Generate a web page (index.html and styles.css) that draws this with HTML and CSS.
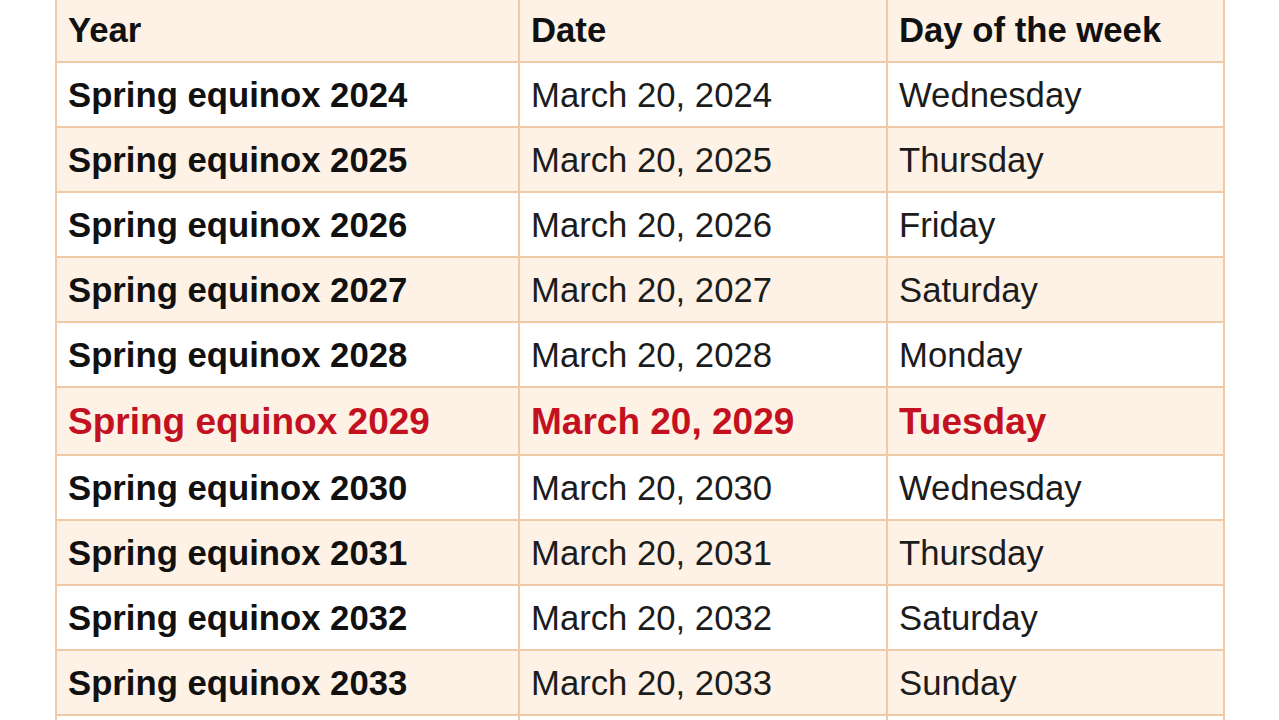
FILE: index.html
```html
<!DOCTYPE html>
<html>
<head>
<meta charset="utf-8">
<link rel="stylesheet" href="styles.css">
</head>
<body>
<table class="equinox">
  <colgroup>
    <col class="c-year">
    <col class="c-date">
    <col class="c-day">
  </colgroup>
  <tr class="head cream">
    <th>Year</th><th>Date</th><th>Day of the week</th>
  </tr>
  <tr><td class="yr">Spring equinox 2024</td><td>March 20, 2024</td><td>Wednesday</td></tr>
  <tr class="cream"><td class="yr">Spring equinox 2025</td><td>March 20, 2025</td><td>Thursday</td></tr>
  <tr><td class="yr">Spring equinox 2026</td><td>March 20, 2026</td><td>Friday</td></tr>
  <tr class="cream"><td class="yr">Spring equinox 2027</td><td>March 20, 2027</td><td>Saturday</td></tr>
  <tr><td class="yr">Spring equinox 2028</td><td>March 20, 2028</td><td>Monday</td></tr>
  <tr class="cream hl"><td class="yr">Spring equinox 2029</td><td>March 20, 2029</td><td>Tuesday</td></tr>
  <tr><td class="yr">Spring equinox 2030</td><td>March 20, 2030</td><td>Wednesday</td></tr>
  <tr class="cream"><td class="yr">Spring equinox 2031</td><td>March 20, 2031</td><td>Thursday</td></tr>
  <tr><td class="yr">Spring equinox 2032</td><td>March 20, 2032</td><td>Saturday</td></tr>
  <tr class="cream"><td class="yr">Spring equinox 2033</td><td>March 20, 2033</td><td>Sunday</td></tr>
  <tr class="tail"><td></td><td></td><td></td></tr>
</table>
</body>
</html>
```
FILE: styles.css
```css
html, body {
  margin: 0;
  padding: 0;
  background: #ffffff;
  overflow: hidden;
}
body {
  font-family: "Liberation Sans", Arial, sans-serif;
  color: #1c1c1c;
}
.equinox {
  border-collapse: collapse;
  width: 1168px;
  margin: -2px 0 0 55px;
  table-layout: fixed;
}
.c-year { width: 463px; }
.c-date { width: 368px; }
.c-day { width: 337px; }
.equinox th,
.equinox td {
  border: 2px solid #f0caa6;
  padding: 2px 0 0 11px;
  height: 61px;
  font-size: 34.7px;
  text-align: left;
  vertical-align: middle;
  white-space: nowrap;
  font-weight: normal;
}
.equinox th,
.equinox td.yr {
  font-weight: bold;
  color: #111111;
}
.equinox tr.head th {
  border-top: none;
}
.cream {
  background: #fdf2e5;
}
.hl td {
  height: 64px;
  font-size: 37px;
  font-weight: bold;
  color: #c4111f;
}
.hl td.yr {
  color: #c4111f;
}
```
